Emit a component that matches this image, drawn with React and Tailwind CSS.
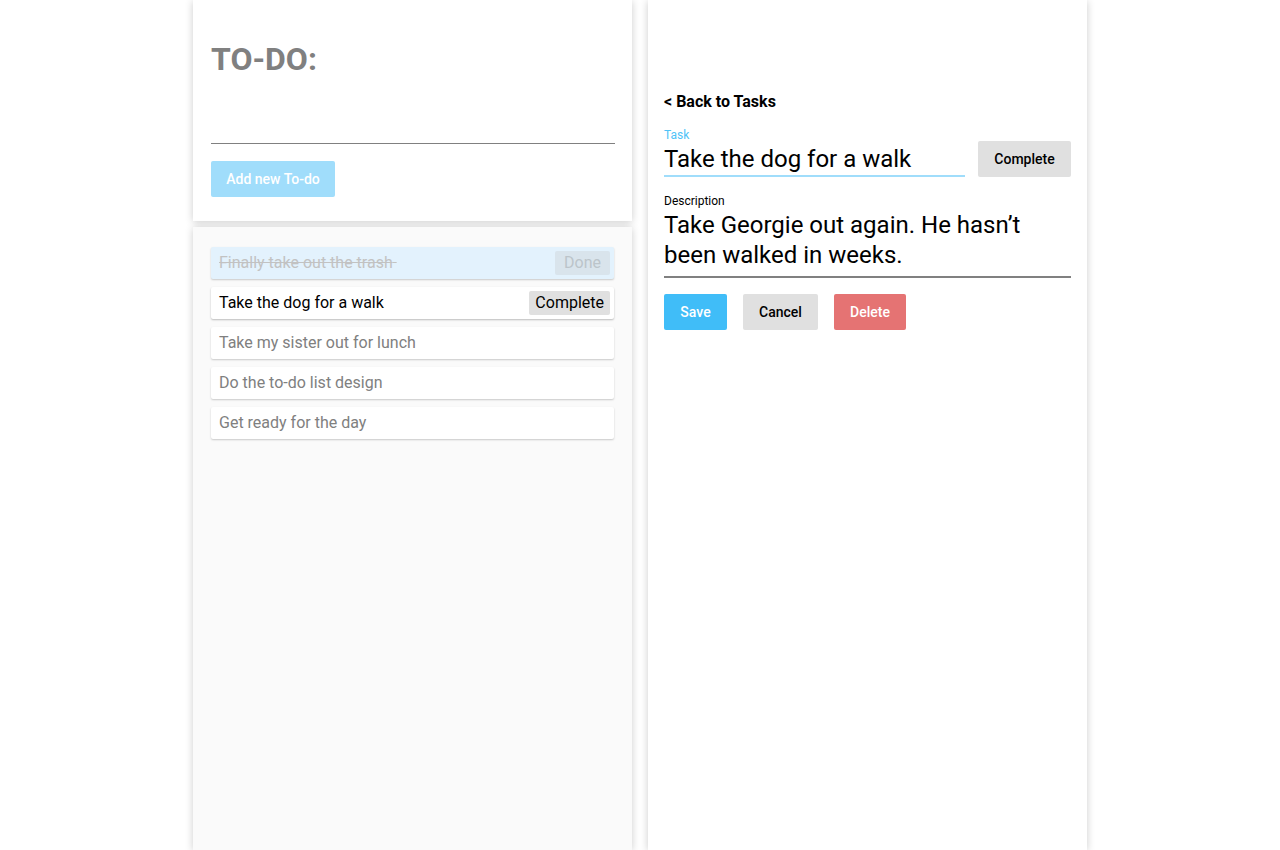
export default function App() {
  const items = [
    { t: "Take my sister out for lunch" },
    { t: "Do the to-do list design" },
    { t: "Get ready for the day" },
  ];
  return (
    <div
      className="flex justify-center gap-4 h-[850px] overflow-hidden bg-white"
      style={{ fontFamily: "Roboto, 'Noto Sans', sans-serif" }}
    >
      {/* Left column */}
      <div className="w-[439px] flex flex-col gap-[6px]">
        <div className="h-[221px] shrink-0 bg-white shadow-[0_1px_8px_rgba(0,0,0,0.2)] pl-[18px] pr-[17px] pt-[43px]">
          <h1 className="text-[32px] leading-[32px] font-bold text-[#808080]">TO-DO:</h1>
          <input
            className="block w-full mt-[36px] h-[33px] border-b border-[#808080] outline-none text-base"
            aria-label="new todo"
          />
          <button className="mt-[17px] h-9 w-[124px] rounded-[2px] bg-[#a0ddfb] text-white text-sm font-medium">
            Add new To-do
          </button>
        </div>
        <div className="flex-1 bg-[#fafafa] shadow-[0_1px_8px_rgba(0,0,0,0.2)] px-[18px] pt-[20px] flex flex-col gap-2">
          <div className="h-8 rounded-[2px] bg-[#e3f2fd] shadow-[0_1px_2px_rgba(0,0,0,0.2)] flex items-center justify-between pl-2 pr-1">
            <span className="text-base text-[#c2c2c2] line-through whitespace-pre">Finally take out the trash{"\u00a0"}</span>
            <span className="h-6 px-[9px] flex items-center bg-[#d9e4ec] text-[#bcc4ca] text-base rounded-[2px]">Done</span>
          </div>
          <div className="h-8 rounded-[2px] bg-white shadow-[0_1px_2px_rgba(0,0,0,0.25)] flex items-center justify-between pl-2 pr-1">
            <span className="text-base text-black">Take the dog for a walk</span>
            <span className="h-6 px-[6px] flex items-center bg-[#e0e0e0] text-black text-base rounded-[2px]">Complete</span>
          </div>
          {items.map((it) => (
            <div
              key={it.t}
              className="h-8 rounded-[2px] bg-white shadow-[0_1px_2px_rgba(0,0,0,0.2)] flex items-center pl-2"
            >
              <span className="text-base text-[#808080]">{it.t}</span>
            </div>
          ))}
        </div>
      </div>

      {/* Right column */}
      <div className="w-[439px] bg-white shadow-[0_1px_8px_rgba(0,0,0,0.2)] px-4 pt-[90px]">
        <div className="text-base leading-6 font-bold text-black">&lt; Back to Tasks</div>
        <div className="mt-[13px] flex items-end gap-[13px]">
          <div className="w-[301px]">
            <div className="text-xs leading-4 text-[#4fc3f7]">Task</div>
            <div className="mt-[2px] text-2xl leading-[28px] text-black pb-[2px] border-b-2 border-[#a0ddfb]">
              Take the dog for a walk
            </div>
          </div>
          <button className="w-[93px] h-9 rounded-[2px] bg-[#e0e0e0] text-black text-sm font-medium">
            Complete
          </button>
        </div>
        <div className="mt-4 text-xs leading-4 text-black">Description</div>
        <div className="mt-[2px] text-2xl leading-[29.5px] text-black pb-[6px] border-b-2 border-[#808080]">
          Take Georgie out again. He hasn’t been walked in weeks.
        </div>
        <div className="mt-4 flex gap-4">
          <button className="h-9 w-[63px] rounded-[2px] bg-[#40bdf8] text-white text-sm font-medium">Save</button>
          <button className="h-9 w-[75px] rounded-[2px] bg-[#e0e0e0] text-black text-sm font-medium">Cancel</button>
          <button className="h-9 w-[72px] rounded-[2px] bg-[#e57373] text-white text-sm font-medium">Delete</button>
        </div>
      </div>
    </div>
  );
}
